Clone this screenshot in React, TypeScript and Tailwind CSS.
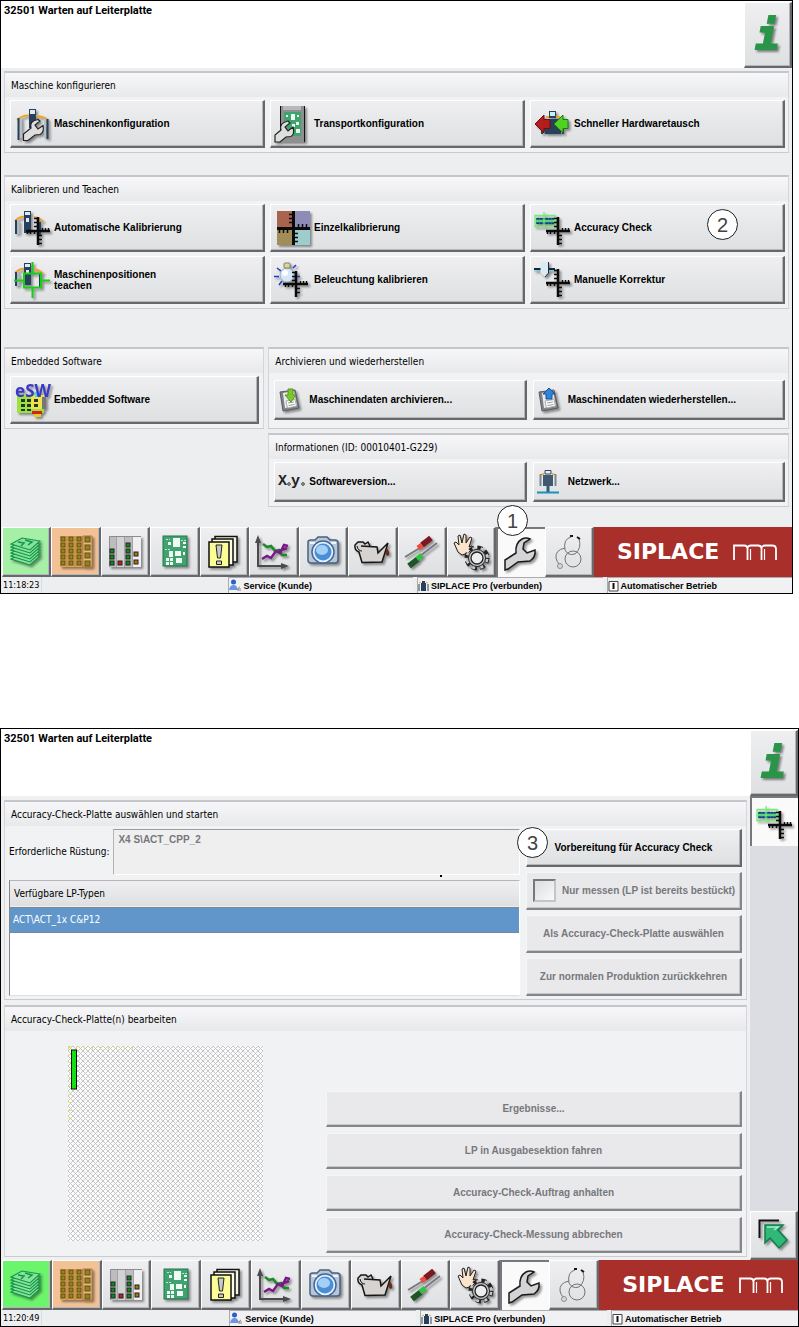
import type { ReactNode } from "react";
import clsx from "clsx";

const bevel =
  "border-t border-l border-r-2 border-b-2 border-t-white border-l-white border-r-[#66686b] border-b-[#66686b] shadow-[inset_-1px_-1px_0_#b4b6b9]";
const face = "bg-linear-to-b from-[#efeff1] via-[#e6e7e9] to-[#dfe0e2]";
const shadow = "drop-shadow-[2px_2px_1px_rgba(0,0,0,0.4)]";
const strong = "font-['Liberation_Sans',sans-serif] font-bold";

function Svg({ size = 38, children }: { size?: number; children: ReactNode }) {
  return (
    <svg
      width={size}
      height={size}
      viewBox={`0 0 ${size} ${size}`}
      className={clsx("shrink-0 overflow-visible", shadow)}
      aria-hidden="true"
    >
      {children}
    </svg>
  );
}

/* ---------- shared drawing parts ---------- */

function Gantry() {
  return (
    <g>
      <path d="M1 12Q6 7 12 8M20 8Q26 9 29 13" fill="none" stroke="#f0a22e" strokeWidth="2" />
      <path d="M2 11V25M26 13V27" stroke="#27405c" strokeWidth="2" />
      <path d="M4.500 12V25" stroke="#b5bac1" strokeWidth="2" />
      <rect x="10" y="2" width="7" height="22" fill="#27405c" />
      <rect x="11" y="3" width="5" height="3" fill="#dfeaf2" />
      <rect x="12" y="9" width="3" height="4" fill="#dfeaf2" />
    </g>
  );
}

function Rulers() {
  return (
    <g stroke="#0b0b0b">
      <path d="M24 8V36M12 22H36" strokeWidth="2.500" />
      <path
        d="M20 9.500H24M20 13.500H24M20 17.500H24M24 26.500H28M24 30.500H28M24 34.500H28M13.500 22V25M16.500 22V25M20.500 22V25M28.500 22V19M31.500 22V19M34.500 22V19"
        strokeWidth="1.500"
      />
    </g>
  );
}

function BoardOutline() {
  return (
    <g>
      <rect x="2" y="9" width="18" height="6" fill="#1f6f96" />
      <path d="M3 9.500H20M3 14.500H20" stroke="#1b3b50" strokeDasharray="2 1" />
      <path d="M1 6.500H21V17.500H1ZM10 3V18M1 12H22" fill="none" stroke="#72ee78" strokeWidth="1.300" />
    </g>
  );
}

/* ---------- icons of the setup page ---------- */

function MachineConfigIcon() {
  return (
    <Svg>
      <path d="M3 15Q10 9 17 11M22 11Q28 11 33 14" fill="none" stroke="#f0a22e" strokeWidth="2" />
      <path d="M4.500 13V35M33.500 14V34" stroke="#27405c" strokeWidth="2" />
      <path d="M7 14V33M31 14V33" stroke="#b9bec5" strokeWidth="2" />
      <rect x="15" y="4" width="7" height="19" fill="#27405c" />
      <rect x="16" y="5" width="5" height="4" fill="#dfeaf2" />
      <path
        d="M9.500 35.500V29L17 23Q15 16 24 14.500L26 16L21 20L24 24L29 20.500Q30.500 27 26 29.500L21 30L14 35.500Z"
        fill="#dedede"
        stroke="#222"
        strokeWidth="1.200"
      />
    </Svg>
  );
}

function TransportIcon() {
  return (
    <Svg>
      <rect x="6" y="1" width="24" height="36" fill="#8e9090" />
      <rect x="9" y="1" width="18" height="4" fill="#b8b8b8" />
      <rect x="10" y="7" width="17" height="24" fill="#3fa36f" />
      <path d="M17 9h4v6h-4zM12 10h2v2h-2zM23 10h2v2h-2zM22 17h3v3h-3zM18 19h3v3h-3zM22 24h4v4h-4zM12 16h3v3h-3z" fill="#e9fbf0" />
      <path d="M6.500 1V37M30.500 1V37" stroke="#111" />
      <path
        d="M1 37V30L7 25Q5 18 14 16L16 18L11 22L14 26L19 22Q21 29 17 31.500L12 32L6 37Z"
        fill="#dedede"
        stroke="#222"
        strokeWidth="1.200"
      />
    </Svg>
  );
}

function SwapIcon() {
  return (
    <Svg>
      <path d="M12 12H17M21 12H26" stroke="#f0a22e" strokeWidth="2" />
      <path d="M13 14H27V29H11V26H9V29H7V22H13Z" fill="#27405c" />
      <path d="M26 24H30V29H28V26" fill="#27405c" />
      <rect x="15" y="6" width="7" height="7" fill="#27405c" />
      <rect x="16" y="7" width="5" height="4" fill="#c8f1f4" />
      <path d="M1 19L10 10V14.500H16V23.500H10V28Z" fill="#b41d1d" stroke="#6b0f0f" />
      <path d="M20 19L29 10V14.500H34V23.500H29V28Z" fill="#50d320" stroke="#1b7a10" />
    </Svg>
  );
}

function AutoCalibrationIcon() {
  return (
    <Svg>
      <Gantry />
      <Rulers />
    </Svg>
  );
}

function SingleCalibrationIcon() {
  return (
    <Svg>
      <rect x="3" y="2" width="16" height="17" fill="#a8644c" />
      <rect x="19" y="2" width="17" height="17" fill="#8d8cb4" />
      <rect x="3" y="19" width="16" height="17" fill="#a08d58" />
      <rect x="19" y="19" width="17" height="17" fill="#9ecbcb" />
      <g stroke="#0b0b0b">
        <path d="M19.500 2V36M3 19.500H36" strokeWidth="3" />
        <path
          d="M15 5.500H19M15 9.500H19M15 13.500H19M20 24.500H24M20 28.500H24M20 32.500H24M5.500 20V24M9.500 20V24M13.500 20V24M24.500 19V15M28.500 19V15M32.500 19V15"
          strokeWidth="1.500"
        />
      </g>
    </Svg>
  );
}

function AccuracyIcon() {
  return (
    <Svg>
      <BoardOutline />
      <Rulers />
    </Svg>
  );
}

function TeachIcon() {
  return (
    <Svg>
      <Gantry />
      <path
        d="M10 12.500H27V26.500H10ZM18.500 1V12M18.500 27V37M0 19.500H10M27 19.500H36"
        fill="none"
        stroke="#17cf17"
        strokeWidth="2"
      />
    </Svg>
  );
}

function LampIcon() {
  return (
    <Svg>
      <path d="M3 7L7 10M0 15.500H5M5 24L8 20M19 7L22 4M21 15.500H26" stroke="#2038c8" strokeWidth="1.500" />
      <circle cx="13" cy="14" r="7" fill="#d5e6f6" stroke="#97afc9" />
      <circle cx="11" cy="12" r="3" fill="#fff" />
      <rect x="10" y="2" width="6" height="5" rx="1" fill="#d8d5a0" stroke="#85815a" />
      <g stroke="#0b0b0b">
        <path d="M22 10V36M9 23H34" strokeWidth="2.500" />
        <path
          d="M18 11.500H22M18 15.500H22M18 19.500H22M22 27.500H26M22 31.500H26M11.500 23V26M14.500 23V26M18.500 23V26M26.500 23V20M29.500 23V20M32.500 23V20"
          strokeWidth="1.500"
        />
      </g>
    </Svg>
  );
}

function ManualIcon() {
  return (
    <Svg>
      <path d="M0 8H7M15 8H21" stroke="#0d2a38" strokeWidth="2" />
      <path d="M0 10H7M15 10H20" stroke="#84c6df" />
      <path d="M6.500 1H14.500V12L11 16L6.500 12Z" fill="#d9ebf4" />
      <path d="M14.500 1V12L11 16" fill="none" stroke="#1c2c36" />
      <Rulers />
    </Svg>
  );
}

function EmbeddedIcon() {
  return (
    <Svg>
      <rect x="3" y="14" width="27" height="18" fill="#9be23c" />
      <path d="M17 14H30V28H17Z" fill="#f0e24a" />
      <path d="M21 11H27V16H21Z" fill="#35e4ee" />
      <path d="M28 16H32V28H28Z" fill="#777" />
      <path
        d="M7 18h4v3h-4zM13 18h4v3h-4zM20 18h4v3h-4zM7 23h4v3h-4zM13 23h4v3h-4zM20 23h4v3h-4zM7 28h4v2h-4zM13 28h4v2h-4z"
        fill="#26352b"
      />
      <path d="M18 30h10v3h-10z" fill="#d42020" />
      <path d="M20 33h7v3h-7z" fill="#e8c91c" />
      <text
        x="1"
        y="16"
        fill="#3a39c4"
        fontFamily='"Noto Sans", sans-serif'
        fontWeight="bold"
        fontSize="17"
      >
        eSW
      </text>
    </Svg>
  );
}

function DiskIcon({ restore }: { restore?: boolean }) {
  return (
    <Svg size={24}>
      <path d="M2 4L17 2L21 20L5 23Z" fill="#80838a" stroke="#5a5c60" />
      <path d="M5 5L16 3L19 18L7 20Z" fill="#ececee" />
      <path d="M8 13L17 11.500L18.500 18L9.500 20Z" fill="#fff" stroke="#aaa" />
      <path d="M10 15L16 14M10.500 17.500L16.500 16.500" stroke="#999" />
      {restore ? (
        <path d="M12 0L18 6H15V11H9V6H6Z" fill="#2c86dc" stroke="#1a4f92" />
      ) : (
        <path d="M10 1H15V7H18L13 14L7 7H10Z" fill="#7cc82c" stroke="#549a18" />
      )}
    </Svg>
  );
}

function VersionIcon() {
  return (
    <svg width="25" height="24" viewBox="0 0 25 24" className="shrink-0 overflow-visible" aria-hidden="true">
      <g fill="#222" fontFamily='"Liberation Mono", monospace' fontWeight="bold" fontSize="15">
        <text x="0" y="15">
          X
        </text>
        <text x="13" y="15">
          y
        </text>
      </g>
      <circle cx="11" cy="14" r="1.300" fill="none" stroke="#333" />
      <circle cx="25" cy="14" r="1.300" fill="none" stroke="#333" />
    </svg>
  );
}

function NetworkIcon() {
  return (
    <svg width="25" height="26" viewBox="0 0 25 26" className="shrink-0" aria-hidden="true">
      <path d="M9 1.500H15V5H9Z" fill="#e4eef4" stroke="#34475b" />
      <path d="M5 6L8 4.500M16 4.500L19 6" stroke="#f0a22e" strokeWidth="1.500" />
      <path d="M7 6H17V17H7Z" fill="#41586f" />
      <path d="M4.500 5V17M19.500 5V17" stroke="#7b8794" strokeWidth="2" />
      <path d="M12 17V23" stroke="#27607c" strokeWidth="3" />
      <path d="M1 23.500H23" stroke="#1d8fb8" strokeWidth="2" />
    </svg>
  );
}

/* ---------- icons of the main toolbar ---------- */

function StackIcon() {
  const layers = [25, 22, 19, 16, 13, 10];
  return (
    <Svg size={36}>
      {layers.map((y) => (
        <polygon
          key={y}
          points={`3,${y} 14,${y - 6} 32,${y - 3} 22,${y + 6}`}
          fill="#86e39a"
          stroke="#14944a"
          strokeWidth="1.100"
        />
      ))}
      <path d="M10 8L16 9L13 12M17 6L24 8L20 11" fill="none" stroke="#14944a" strokeWidth="1.500" />
    </Svg>
  );
}

function FeederIcon() {
  const rows = [0, 1, 2, 3, 4];
  return (
    <Svg size={36}>
      <rect x="2" y="2" width="32" height="31" fill="#d9a55c" />
      <path d="M9 2V33M17 2V33M25 2V33" stroke="#b3823f" />
      <path d="M25 2V33H34V2Z" fill="#e8b982" stroke="#a97840" />
      {rows.map((r) =>
        [3, 11, 19].map((x) => (
          <rect key={`${r}-${x}`} x={x} y={3 + r * 6} width="4" height="4" fill="#8a8a1c" stroke="#6a4a10" />
        )),
      )}
      {[0, 1, 2, 3].map((r) => (
        <rect key={r} x="27" y={3 + r * 8} width="5" height="5" fill="#8a8a1c" stroke="#6a4a10" />
      ))}
    </Svg>
  );
}

function LevelsIcon() {
  const cells = [
    { x: 3, y: 15, fill: "#0c8a1c" },
    { x: 3, y: 21, fill: "#0c8a1c" },
    { x: 3, y: 27, fill: "#0c8a1c" },
    { x: 11, y: 27, fill: "#d31818" },
    { x: 19, y: 9, fill: "#0c8a1c" },
    { x: 19, y: 15, fill: "#0c8a1c" },
    { x: 19, y: 21, fill: "#0c8a1c" },
    { x: 19, y: 27, fill: "#0c8a1c" },
    { x: 27, y: 18, fill: "#a8740c" },
    { x: 27, y: 26, fill: "#a8740c" },
  ];
  return (
    <Svg size={36}>
      <rect x="2" y="2" width="32" height="31" fill="#bdbdc0" />
      <path d="M9 2H17V33H9Z" fill="#d2d2d5" />
      <path d="M25 2H34V33H25Z" fill="#efeff1" />
      <path d="M9.500 2V33M17.500 2V33M25.500 2V33" stroke="#a3a3a6" />
      <path d="M2.500 33V2.500H34" fill="none" stroke="#8c8c90" />
      {cells.map((c) => (
        <rect key={`${c.x}-${c.y}`} x={c.x} y={c.y} width="4" height="4" fill={c.fill} stroke="#222" />
      ))}
    </Svg>
  );
}

function BoardIcon() {
  return (
    <Svg size={36}>
      <rect x="6" y="2" width="24" height="30" fill="#3fa26f" stroke="#26794e" />
      <path
        d="M16 4h7v9h-7zM11 8h3v3h-3zM26 8h3v2h-3zM26 12h3v2h-3zM12 17h4v6h-4zM18 17h6v5h-6zM26 18h2v3h-2zM9 24h3v3h-3zM13 24h3v3h-3zM9 28h3v3h-3zM13 28h3v3h-3zM19 24h6v5h-6z"
        fill="#effcf4"
      />
      <path d="M8 15.500H14M24 6.500H29M9 5.500H13" stroke="#bfe9d0" strokeDasharray="2 1" />
    </Svg>
  );
}

function MessagesIcon() {
  return (
    <Svg size={36}>
      <path d="M9 2.500H31V28H9Z" fill="#f4f4e6" stroke="#111" strokeWidth="1.500" />
      <path d="M6 5H27V31H6Z" fill="#fbfbe2" stroke="#111" strokeWidth="1.500" />
      <path d="M3 8H23V33H3Z" fill="#fdfd98" stroke="#111" strokeWidth="1.500" />
      <path d="M10 11H16L14.500 24H11.500Z" fill="#c9c9c9" stroke="#222" />
      <path d="M10.500 27H15.500V30.500H10.500Z" fill="#c9c9c9" stroke="#222" />
    </Svg>
  );
}

function ChartIcon() {
  return (
    <Svg size={36}>
      <path d="M3 6V32H30" fill="none" stroke="#4a4a4c" strokeWidth="2" />
      <path d="M3 1L6 9H0ZM34 32L26 29V35Z" fill="#4a4a4c" />
      <path d="M8 10L12 13L16 12L20 17L24 16L27 21L32 21" fill="none" stroke="#1d8a2a" strokeWidth="2.500" />
      <path d="M7 25L12 22L16 24L21 17L25 19L29 11L33 12M24 17L32 14" fill="none" stroke="#7c1788" strokeWidth="2.500" />
    </Svg>
  );
}

function CameraIcon() {
  return (
    <Svg size={36}>
      <path
        d="M3 8Q3 6 6 6L10 6L13 3H22L25 6H30Q33 6 33 9V26Q33 29 30 29H6Q3 29 3 26Z"
        fill="#b9c6d6"
        stroke="#4a6280"
        strokeWidth="1.500"
      />
      <path d="M5 9H10M26 9H31" stroke="#eef4fa" strokeWidth="2" />
      <circle cx="18" cy="18" r="11" fill="#e8f1fa" stroke="#41699c" strokeWidth="1.500" />
      <circle cx="18" cy="18" r="8.500" fill="#4a8ed8" />
      <ellipse cx="17" cy="16" rx="6" ry="5" fill="#a5d0f6" />
    </Svg>
  );
}

function OilIcon() {
  return (
    <Svg size={36}>
      <path
        d="M7 12L23 13L24 19L34 9L28 28L8 28.500L5 18Q0 16 1 11L4 8L9 8L11 10L14 8L16 12"
        fill="#d6d3d0"
        stroke="#151515"
        strokeWidth="1.500"
      />
      <path d="M3 12Q4 17 8 17" fill="none" stroke="#151515" />
      <path d="M33 14Q37 20 34 22Q30 21 33 14Z" fill="#6d2a12" />
    </Svg>
  );
}

function ToolsIcon() {
  return (
    <Svg size={36}>
      <path d="M1 23L19 12M16 22L33 9" stroke="#77797c" strokeWidth="2" />
      <path d="M18 11L27 4" stroke="#7e1820" strokeWidth="6" />
      <path d="M14 14L18 11" stroke="#f04a3c" strokeWidth="5" />
      <path d="M5 32L14 25" stroke="#1f5428" strokeWidth="6" />
      <path d="M13 25L18 21" stroke="#2fc440" strokeWidth="5" />
    </Svg>
  );
}

function HandGearIcon() {
  return (
    <Svg size={36}>
      <path
        d="M5 18L1 9L3 8L6 11L5 2L7 1L9 9L11 0L13 1L13 9L17 3L19 4L16 13L19 12L20 14L15 19L9 21Z"
        fill="#fbe3cc"
        stroke="#222"
      />
      <g fill="none" stroke="#222">
        <circle cx="24" cy="24" r="10.500" strokeWidth="4" strokeDasharray="5 3.250" />
        <circle cx="24" cy="24" r="10" stroke="#c8c8ca" strokeWidth="3" strokeDasharray="3 5.250" strokeDashoffset="-1" />
        <circle cx="24" cy="24" r="8.500" fill="#c8c8ca" />
        <circle cx="24" cy="24" r="6" fill="#ededef" strokeWidth="1.300" />
      </g>
    </Svg>
  );
}

function WrenchIcon() {
  return (
    <Svg size={36}>
      <path
        d="M1 35V25L12 18Q11 8 18 4Q22 2 26 4L20 8L19 14L23 18L31 15Q32 22 26 26L14 27L4 34Z"
        fill="#d4d4d6"
        stroke="#1a1a1a"
        strokeWidth="1.500"
      />
    </Svg>
  );
}

function StethoscopeIcon() {
  return (
    <svg width="36" height="36" viewBox="0 0 36 36" className="shrink-0" aria-hidden="true">
      <g fill="none" stroke="#747476">
        <path d="M20 3Q12 5 14 16Q17 22 24 20Q31 14 28 5" />
        <path d="M14 14Q4 16 5 24Q6 28 8 30" />
        <circle cx="22" cy="25" r="8" />
      </g>
      <path d="M19 2L22 2M26 3L29 5" stroke="#151515" strokeWidth="2" />
      <circle cx="9" cy="32" r="2.500" fill="#d8d8da" stroke="#8d8d90" />
    </svg>
  );
}

function BackIcon() {
  return (
    <Svg size={36}>
      <path d="M3.500 21V3.500H23" fill="none" stroke="#111" strokeWidth="2" />
      <path d="M9 8H27L22 13L31 23L23 31L14 21L9 26Z" fill="#2fb878" stroke="#137a4a" strokeWidth="1.500" />
      <path d="M11 10H22L18 13" fill="none" stroke="#a8ecc9" strokeWidth="1.500" />
    </Svg>
  );
}

/* ---------- building blocks ---------- */

function Group({ title, children }: { title: string; children: ReactNode }) {
  return (
    <section className="flex flex-col border-x border-t-2 border-b border-x-[#d3d5d8] border-t-[#c4c6c9] border-b-[#c9cbce] bg-[#f1f2f4]">
      <h2 className="h-6 bg-linear-to-b from-[#f7f7f9] to-[#e8e9eb] px-1.5 pt-[5px]">{title}</h2>
      {children}
    </section>
  );
}

function StatusTitle() {
  return (
    <h1 className="px-[3px] pt-0.5 font-['Roboto',sans-serif] text-[11px] font-bold">
      32501 Warten auf Leiterplatte
    </h1>
  );
}

function MenuButton({ icon, label }: { icon: ReactNode; label: string }) {
  return (
    <button
      type="button"
      className={clsx(
        "flex h-12 min-w-0 items-center gap-0.5 pl-[3px] text-left leading-[11px]",
        strong,
        bevel,
        face,
      )}
    >
      {icon}
      <span className="whitespace-pre-line">{label}</span>
    </button>
  );
}

function WideMenuButton({ icon, label }: { icon: ReactNode; label: string }) {
  return (
    <button
      type="button"
      className={clsx("flex h-10 min-w-0 items-center text-left", strong, bevel, face)}
    >
      <span className="flex w-[34px] shrink-0 justify-center pr-1">{icon}</span>
      <span>{label}</span>
    </button>
  );
}

function ActionButton({ label, disabled }: { label: string; disabled?: boolean }) {
  return (
    <button
      type="button"
      disabled={disabled}
      className={clsx(
        "flex-1 text-center",
        strong,
        disabled
          ? "border-t border-l border-r-2 border-b-2 border-t-[#f6f6f8] border-l-[#f6f6f8] border-r-[#85868a] border-b-[#85868a] bg-[#e9e9ec] text-[#77787b] shadow-[inset_-1px_-1px_0_#c6c7ca]"
          : [bevel, face],
      )}
    >
      {label}
    </button>
  );
}

function Callout({ n, className }: { n: number; className: string }) {
  return (
    <span
      className={clsx(
        "absolute z-10 flex size-[31px] items-center justify-center rounded-full border border-[#222] bg-white font-['Liberation_Sans',sans-serif] text-[20px] leading-none text-[#444]",
        className,
      )}
    >
      {n}
    </span>
  );
}

function InfoButton() {
  return (
    <button
      type="button"
      aria-label="Information"
      className={clsx(
        "h-[66px] w-12 shrink-0 font-['DejaVu_Sans_Mono',monospace] text-[40px] leading-none font-bold text-[#2a9448] italic [-webkit-text-stroke:2px_#2a9448]",
        bevel,
        face,
      )}
    >
      <span className="drop-shadow-[2px_2px_1px_rgba(0,0,0,0.45)]">i</span>
    </button>
  );
}

const tools = [
  { name: "Produktion", icon: <StackIcon /> },
  { name: "Rüstung", icon: <FeederIcon /> },
  { name: "Füllstände", icon: <LevelsIcon /> },
  { name: "Leiterplatte", icon: <BoardIcon /> },
  { name: "Meldungen", icon: <MessagesIcon /> },
  { name: "Statistik", icon: <ChartIcon /> },
  { name: "Kamera", icon: <CameraIcon /> },
  { name: "Wartung", icon: <OilIcon /> },
  { name: "Werkzeuge", icon: <ToolsIcon /> },
  { name: "Handbetrieb", icon: <HandGearIcon /> },
  { name: "Einrichten", icon: <WrenchIcon /> },
  { name: "Diagnose", icon: <StethoscopeIcon /> },
];

function Toolbar({ firstTone }: { firstTone: string }) {
  return (
    <div className="flex h-[50px]">
      <nav className="flex w-3/4 pl-px">
        {tools.map((tool, i) => (
          <button
            key={tool.name}
            type="button"
            aria-label={tool.name}
            className={clsx(
              "flex min-w-0 flex-1 items-center justify-center",
              tool.name === "Einrichten"
                ? "border-t-2 border-l-2 border-[#77787b] bg-[#fafafb]"
                : bevel,
              i === 0 && firstTone,
              i === 1 && "bg-[#f2c296]",
              i > 1 && tool.name !== "Einrichten" && face,
            )}
          >
            {tool.icon}
          </button>
        ))}
      </nav>
      <div className="flex w-1/4 items-center justify-center gap-3.5 bg-[#a92f2a] pl-2 text-white">
        <span className="font-['DejaVu_Sans',sans-serif] text-[22px] leading-none font-bold">SIPLACE</span>
        <svg width="44" height="16" viewBox="0 0 44 16" fill="none" stroke="#fff" strokeWidth="1.800" aria-hidden="true">
          <path d="M1 16V1.500H11Q14.500 1.500 14.500 5V16M14.500 5Q14.500 1.500 18 1.500H25Q28.500 1.500 28.500 5V16M28.500 5Q28.500 1.500 32 1.500H39Q43 1.500 43 5V16" />
          <path d="M17.500 16V5M31.500 16V5" strokeWidth="1.200" />
        </svg>
      </div>
    </div>
  );
}

function StatusBar({ time }: { time: string }) {
  const field = clsx(
    "flex items-center gap-0.5 overflow-hidden border-t border-l border-[#a9abae] bg-[#f1f1f3] whitespace-nowrap",
    strong,
  );
  return (
    <footer className="grid h-4 grid-cols-[6fr_5fr_5fr_5fr] gap-x-1 bg-[#edeef0] text-[9px] leading-4">
      <div className="flex">
        <time className="border-r border-[#dadbdd] px-0.5">{time}</time>
      </div>
      <div className={field}>
        <svg width="13" height="13" viewBox="0 0 13 13" aria-hidden="true">
          <circle cx="4.500" cy="3" r="2.500" fill="#2b5fd0" />
          <path d="M0 11Q1 6 4.500 6T9 11Z" fill="#6d95dc" />
          <path d="M9 12Q9 8 11 8M11 12V9" fill="none" stroke="#888" />
        </svg>
        Service (Kunde)
      </div>
      <div className={field}>
        <svg width="11" height="12" viewBox="0 0 11 12" aria-hidden="true">
          <path d="M3 3H8V11H3ZM4 1H7V3H4Z" fill="#27405c" />
          <path d="M1 4V11M10 4V11" stroke="#6b7c90" strokeWidth="1.500" />
          <path d="M1 3L3 2M8 2L10 3" stroke="#f0a22e" />
        </svg>
        SIPLACE Pro (verbunden)
      </div>
      <div className={field}>
        <svg width="11" height="12" viewBox="0 0 11 12" aria-hidden="true">
          <path d="M1 1.500H10V11H1Z" fill="#fff" stroke="#444" />
          <path d="M5.500 3V9" stroke="#111" strokeWidth="2" />
        </svg>
        Automatischer Betrieb
      </div>
    </footer>
  );
}

/* ---------- screens ---------- */

function SetupScreen() {
  return (
    <section className="relative mr-1.5 border border-black bg-[#edeef0]">
      <header className="flex h-[67px] justify-between bg-white">
        <StatusTitle />
        <div className="pt-px">
          <InfoButton />
        </div>
      </header>

      <main className="flex flex-col px-[3px] pt-[3px] pb-5">
        <Group title="Maschine konfigurieren">
          <div className="grid grid-cols-3 gap-[5px] pt-[3px] pr-[3px] pb-1 pl-[5px]">
            <MenuButton icon={<MachineConfigIcon />} label="Maschinenkonfiguration" />
            <MenuButton icon={<TransportIcon />} label="Transportkonfiguration" />
            <MenuButton icon={<SwapIcon />} label="Schneller Hardwaretausch" />
          </div>
        </Group>

        <div className="mt-[22px] flex flex-col">
          <Group title="Kalibrieren und Teachen">
            <div className="relative grid grid-cols-3 gap-x-[5px] gap-y-1 pt-[3px] pr-[3px] pb-1 pl-[5px]">
              <MenuButton icon={<AutoCalibrationIcon />} label="Automatische Kalibrierung" />
              <MenuButton icon={<SingleCalibrationIcon />} label="Einzelkalibrierung" />
              <MenuButton icon={<AccuracyIcon />} label="Accuracy Check" />
              <MenuButton icon={<TeachIcon />} label={"Maschinenpositionen\nteachen"} />
              <MenuButton icon={<LampIcon />} label="Beleuchtung kalibrieren" />
              <MenuButton icon={<ManualIcon />} label="Manuelle Korrektur" />
              <Callout n={2} className="top-2 right-[50px]" />
            </div>
          </Group>
        </div>

        <div className="mt-[38px] grid grid-cols-[1fr_2fr] items-start gap-1">
          <Group title="Embedded Software">
            <div className="grid pt-[3px] pr-1 pb-1 pl-[5px]">
              <MenuButton icon={<EmbeddedIcon />} label="Embedded Software" />
            </div>
          </Group>
          <div className="flex flex-col gap-1">
            <Group title="Archivieren und wiederherstellen">
              <div className="grid grid-cols-2 gap-1.5 pt-[7px] pr-[3px] pb-2 pl-[5px]">
                <WideMenuButton icon={<DiskIcon />} label="Maschinendaten archivieren..." />
                <WideMenuButton icon={<DiskIcon restore />} label="Maschinendaten wiederherstellen..." />
              </div>
            </Group>
            <Group title="Informationen (ID: 00010401-G229)">
              <div className="grid grid-cols-2 gap-1.5 pt-[3px] pr-[3px] pb-1 pl-[5px]">
                <WideMenuButton icon={<VersionIcon />} label="Softwareversion..." />
                <WideMenuButton icon={<NetworkIcon />} label="Netzwerk..." />
              </div>
            </Group>
          </div>
        </div>
      </main>

      <div className="relative">
        <Toolbar firstTone="bg-[#a6efa6]" />
        <Callout n={1} className="-top-[22px] left-[62.7%]" />
      </div>
      <StatusBar time="11:18:23" />
    </section>
  );
}

function BoardPreview() {
  return (
    <svg width="195" height="195" viewBox="0 0 195 195" role="img" aria-label="Leiterplatte">
      <defs>
        <pattern id="mesh" width="5" height="5" patternUnits="userSpaceOnUse">
          <path d="M0 0L5 5M5 0L0 5" stroke="#c0c0c2" strokeWidth="0.900" />
        </pattern>
      </defs>
      <rect width="195" height="195" fill="#fcfcfc" />
      <rect width="195" height="195" fill="url(#mesh)" />
      <path d="M0 2H72" stroke="#e6e03c" strokeWidth="3" strokeDasharray="1 7" />
      <path d="M2 0V74" stroke="#e6e03c" strokeWidth="3" strokeDasharray="1 7" />
      <rect x="3.500" y="4" width="5" height="39" fill="#12e212" stroke="#111" />
    </svg>
  );
}

function AccuracyScreen() {
  return (
    <section className="border border-black bg-[#f0f0f2]">
      <div className="flex">
        <div className="min-w-0 flex-1">
          <header className="h-[67px] bg-white">
            <StatusTitle />
          </header>

          <main className="flex flex-col gap-[5px] px-[3px] pt-1 pb-[3px]">
            <Group title="Accuracy-Check-Platte auswählen und starten">
              <div className="flex gap-1.5 pt-[3px] pr-1 pb-[3px] pl-1">
                <div className="flex min-w-0 flex-1 flex-col gap-[5px]">
                  <div className="relative flex h-[46px] items-center gap-1">
                    <label htmlFor="setup" className="shrink-0">
                      Erforderliche Rüstung:
                    </label>
                    <textarea
                      id="setup"
                      readOnly
                      defaultValue="X4 S\ACT_CPP_2"
                      className={clsx(
                        "h-full min-w-0 flex-1 resize-none border border-t-[#9a9b9e] border-r-white border-b-white border-l-[#b4b5b8] bg-[#efeff0] px-1 py-0.5 text-[#77787b]",
                        strong,
                      )}
                    />
                    <span className="absolute right-[78px] -bottom-0.5 size-0.5 bg-black" />
                  </div>
                  <div className="h-[116px] border border-t-[#b4b5b8] border-r-white border-b-[#dedfe1] border-l-[#85868a] bg-white">
                    <table className="w-full border-collapse text-left">
                      <thead>
                        <tr className="h-[26px] border-b border-[#85868a] bg-linear-to-b from-[#f0f0f2] to-[#dedfe1]">
                          <th className="px-1 font-normal">Verfügbare LP-Typen</th>
                        </tr>
                      </thead>
                      <tbody>
                        <tr className="h-[25px] border-b border-[#7b8794] bg-[#6196cb] text-white">
                          <td className="px-[3px]">ACT\ACT_1x C&amp;P12</td>
                        </tr>
                      </tbody>
                    </table>
                  </div>
                </div>

                <div className="relative flex w-54 shrink-0 flex-col gap-[5px]">
                  <ActionButton label="Vorbereitung für Accuracy Check" />
                  <label
                    className={clsx(
                      "flex flex-1 items-center gap-1.5 border-t border-l border-r-2 border-b-2 border-t-[#f6f6f8] border-l-[#f6f6f8] border-r-[#85868a] border-b-[#85868a] bg-[#e9e9ec] pl-1.5 whitespace-nowrap text-[#77787b] shadow-[inset_-1px_-1px_0_#c6c7ca]",
                      strong,
                    )}
                  >
                    <input
                      type="checkbox"
                      disabled
                      className="size-[23px] shrink-0 appearance-none border-2 border-t-[#77787b] border-r-[#c4c5c8] border-b-[#c4c5c8] border-l-[#77787b] bg-linear-to-br from-[#dcdde0] to-[#fafafa]"
                    />
                    Nur messen (LP ist bereits bestückt)
                  </label>
                  <ActionButton label="Als Accuracy-Check-Platte auswählen" disabled />
                  <ActionButton label="Zur normalen Produktion zurückkehren" disabled />
                  <Callout n={3} className="-top-0.5 -left-[9px]" />
                </div>
              </div>
            </Group>

            <Group title="Accuracy-Check-Platte(n) bearbeiten">
              <div className="flex h-[225px] pr-1 pb-[3px]">
                <div className="flex flex-1 items-end justify-center pb-3">
                  <BoardPreview />
                </div>
                <div className="flex w-104 shrink-0 flex-col gap-1.5 pt-[60px]">
                  <ActionButton label="Ergebnisse..." disabled />
                  <ActionButton label="LP in Ausgabesektion fahren" disabled />
                  <ActionButton label="Accuracy-Check-Auftrag anhalten" disabled />
                  <ActionButton label="Accuracy-Check-Messung abbrechen" disabled />
                </div>
              </div>
            </Group>
          </main>
        </div>

        <aside className="flex w-12 shrink-0 flex-col bg-[#dcdde2]">
          <div className="bg-white pt-px">
            <InfoButton />
          </div>
          <button
            type="button"
            aria-label="Accuracy Check"
            className="flex h-[50px] items-center justify-center border-t-2 border-l-2 border-[#77787b] bg-[#fafafb]"
          >
            <AccuracyIcon />
          </button>
          <button
            type="button"
            aria-label="Zurück"
            className={clsx("mt-auto flex h-[49px] items-center justify-center", bevel, face)}
          >
            <BackIcon />
          </button>
        </aside>
      </div>

      <Toolbar firstTone="bg-[#6cf46c]" />
      <StatusBar time="11:20:49" />
    </section>
  );
}

export default function App() {
  return (
    <div className="flex flex-col gap-[134px] bg-white font-['DejaVu_Sans_Condensed','DejaVu_Sans',sans-serif] text-[10px] leading-4 text-black">
      <SetupScreen />
      <AccuracyScreen />
    </div>
  );
}
